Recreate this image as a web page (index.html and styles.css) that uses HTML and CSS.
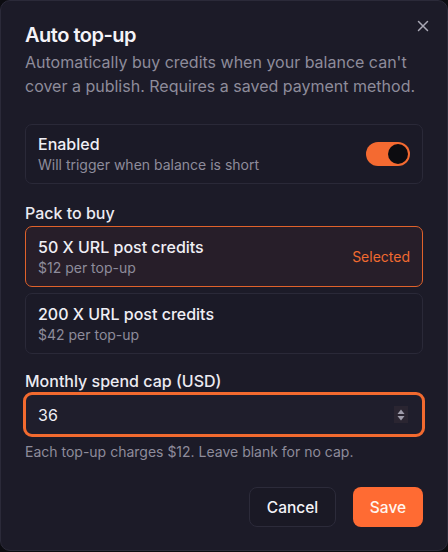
FILE: index.html
```html
<!DOCTYPE html>
<html>
<head>
<meta charset="utf-8">
<link rel="stylesheet" href="styles.css">
</head>
<body>
<div class="dialog">
  <button class="close" aria-label="Close">
    <svg width="12" height="12" viewBox="0 0 12 12"><path d="M1.5 1.5L10.5 10.5M10.5 1.5L1.5 10.5" stroke="currentColor" stroke-width="1.5" stroke-linecap="round"/></svg>
  </button>
  <h2 class="title">Auto top-up</h2>
  <p class="desc">Automatically buy credits when your balance can't cover a publish. Requires a saved payment method.</p>

  <div class="card toggle-card">
    <div class="card-text">
      <div class="card-title">Enabled</div>
      <div class="card-sub">Will trigger when balance is short</div>
    </div>
    <div class="switch"><div class="knob"></div></div>
  </div>

  <div class="label">Pack to buy</div>
  <div class="options">
    <div class="card option selected">
      <div class="card-text">
        <div class="card-title">50 X URL post credits</div>
        <div class="card-sub">$12 per top-up</div>
      </div>
      <span class="sel">Selected</span>
    </div>
    <div class="card option">
      <div class="card-text">
        <div class="card-title">200 X URL post credits</div>
        <div class="card-sub">$42 per top-up</div>
      </div>
    </div>
  </div>

  <div class="label cap-label">Monthly spend cap (USD)</div>
  <div class="input">
    <span class="value">36</span>
    <span class="spin">
      <svg width="10" height="14" viewBox="0 0 10 14"><path d="M5 1.5L8.5 6H1.5Z" fill="#9e9caa"/><path d="M5 12.5L8.5 8H1.5Z" fill="#9e9caa"/></svg>
    </span>
  </div>
  <div class="help">Each top-up charges $12. Leave blank for no cap.</div>

  <div class="actions">
    <button class="btn cancel">Cancel</button>
    <button class="btn save">Save</button>
  </div>
</div>
</body>
</html>
```
FILE: styles.css
```css
* { box-sizing: border-box; }
html, body { margin: 0; padding: 0; background: #0c0c11; }
body {
  width: 448px;
  height: 552px;
  font-family: Inter, "Noto Sans", sans-serif;
  color: #ecebf2;
}
.dialog {
  position: relative;
  width: 448px;
  height: 551px;
  background: #1c1b28;
  border: 1px solid #2b2a39;
  border-radius: 10px;
  padding: 21px 24px 0 24px;
}
.close {
  position: absolute;
  top: 17px;
  right: 16px;
  width: 16px;
  height: 16px;
  padding: 0;
  border: none;
  background: none;
  color: #a9a8b5;
  display: flex;
  align-items: center;
  justify-content: center;
}
.title {
  margin: 0;
  font-size: 20px;
  font-weight: 600;
  line-height: 26px;
  color: #f4f3f8;
  letter-spacing: -0.5px;
}
.desc {
  margin: 2px 0 0 0;
  font-size: 16px;
  line-height: 24px;
  color: #8e8c9b;
}
.card {
  border: 1px solid #2a2938;
  border-radius: 7px;
  background: #1b1a27;
  display: flex;
  align-items: center;
  justify-content: space-between;
  padding: 0 12px 0 12px;
  height: 61px;
}
.toggle-card { margin-top: 26px; height: 60px; }
.card-title {
  font-size: 16px;
  font-weight: 500;
  line-height: 22px;
  color: #f0eff5;
}
.card-sub {
  font-size: 14px;
  line-height: 20px;
  color: #8e8c9b;
}
.switch {
  width: 44px;
  height: 24px;
  border-radius: 12px;
  background: #f46a31;
  padding: 2px;
  display: flex;
  justify-content: flex-end;
}
.knob {
  width: 20px;
  height: 20px;
  border-radius: 50%;
  background: #0c0c10;
}
.label {
  margin-top: 18px;
  font-size: 16px;
  font-weight: 500;
  line-height: 22px;
  color: #ecebf2;
}
.options {
  margin-top: 2px;
  display: flex;
  flex-direction: column;
  gap: 6px;
}
.option.selected {
  border-color: #e0622b;
  background: #271e29;
}
.sel {
  color: #f06a30;
  font-size: 14px;
}
.cap-label { margin-top: 16px; }
.input {
  margin: 0 -2px 0 -2px;
  height: 45px;
  border: 3px solid #f26a2f;
  border-radius: 9px;
  background: #1f1e2c;
  display: flex;
  align-items: center;
  justify-content: space-between;
  padding: 0 14px 0 12px;
}
.value {
  font-size: 16px;
  color: #f0eff5;
}
.spin {
  width: 14px;
  height: 17px;
  background: #2a2531;
  display: flex;
  align-items: center;
  justify-content: center;
}
.help {
  margin-top: 5px;
  font-size: 14px;
  line-height: 20px;
  color: #8e8c9b;
}
.actions {
  margin-top: 25px;
  display: flex;
  justify-content: flex-end;
  gap: 17px;
}
.btn {
  font-family: Inter, "Noto Sans", sans-serif;
  font-size: 15.5px;
  font-weight: 500;
  height: 40px;
  border-radius: 8px;
  padding: 0;
  color: #f4f3f8;
}
.cancel {
  background: #1a1925;
  border: 1px solid #2c2b3a;
  width: 87px;
}
.save {
  background: #ff6b33;
  border: none;
  width: 70px;
  color: #fff5ef;
}
```
